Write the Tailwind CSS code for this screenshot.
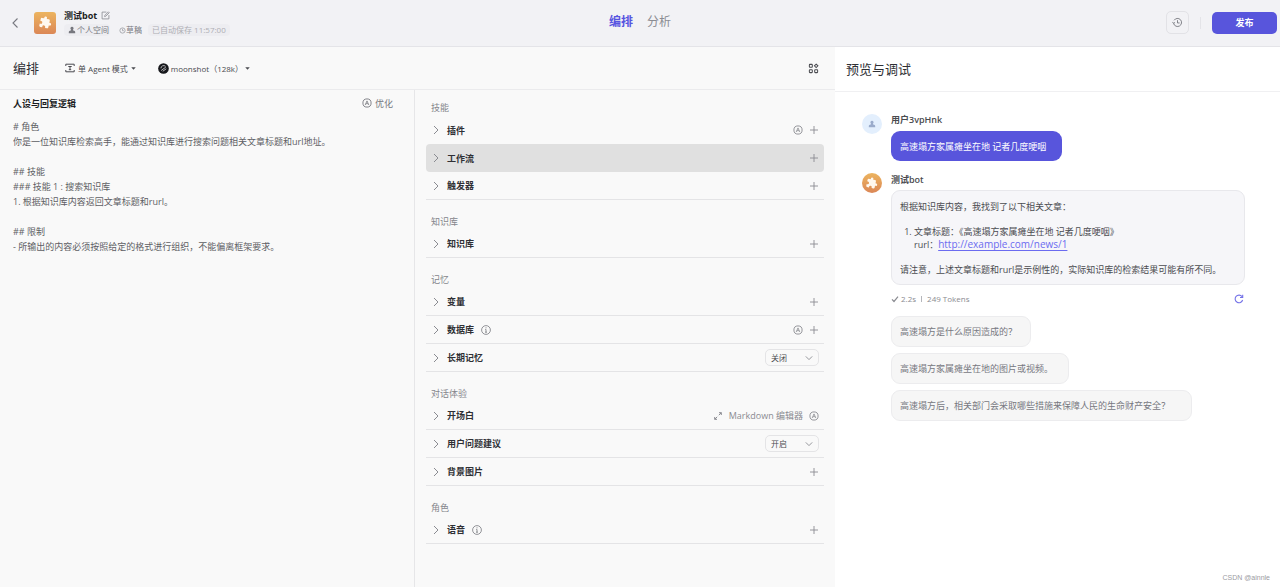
<!DOCTYPE html>
<html lang="zh-CN">
<head>
<meta charset="utf-8">
<meta name="viewport" content="width=device-width, initial-scale=1">
<title>测试bot - 编排</title>
<script src="https://cdn.jsdelivr.net/npm/@tailwindcss/browser@4"></script>
</head>
<body class="relative flex min-h-screen flex-col bg-white font-['Open_Sans','Noto_Sans_CJK_SC',sans-serif] text-[9px] leading-[15px] text-[#4a4b50]">
<svg class="hidden" aria-hidden="true">
  <symbol id="chev" viewBox="0 0 8 10"><path d="M2 1l4 4-4 4" fill="none" stroke="currentColor" stroke-width="1"/></symbol>
  <symbol id="down" viewBox="0 0 8 8"><path d="M.8 2.4L4 5.6l3.2-3.2" fill="none" stroke="currentColor" stroke-width=".9"/></symbol>
  <symbol id="plus" viewBox="0 0 10 10"><path d="M5 1v8M1 5h8" fill="none" stroke="currentColor" stroke-width=".9"/></symbol>
  <symbol id="auto" viewBox="0 0 10 10"><circle cx="5" cy="5" r="4.1" fill="none" stroke="currentColor" stroke-width=".9"/><path d="M3.2 7L5 2.9 6.8 7M3.9 5.7h2.2" fill="none" stroke="currentColor" stroke-width=".8"/></symbol>
  <symbol id="info" viewBox="0 0 10 10"><circle cx="5" cy="5" r="4.4" fill="none" stroke="currentColor" stroke-width=".8"/><path d="M5 2.3v1M4.2 4.4H5v2.8M4 7.2h2" fill="none" stroke="currentColor" stroke-width=".8"/></symbol>
  <symbol id="caret" viewBox="0 0 6 4"><path d="M0 .3h6L3 3.700z" fill="currentColor"/></symbol>
  <symbol id="puzzle" viewBox="0 0 24 24"><path fill="currentColor" d="M20.5 11H19V7c0-1.100-.9-2-2-2h-4V3.500a2.500 2.500 0 0 0-5 0V5H4c-1.100 0-2 .9-2 2v3.800h1.500a2.700 2.700 0 0 1 0 5.400H2V20c0 1.100.9 2 2 2h3.800v-1.500a2.700 2.700 0 0 1 5.400 0V22H17c1.100 0 2-.9 2-2v-4h1.500a2.500 2.500 0 0 0 0-5z"/></symbol>
  <symbol id="person" viewBox="0 0 10 10"><path fill="currentColor" d="M5 1a2 2 0 0 1 1.300 3.500L6.500 5.500c1.600.2 2.500.9 2.500 2.300V9H1V7.800C1 6.400 1.900 5.700 3.500 5.500l.2-1A2 2 0 0 1 5 1z"/></symbol>
</svg>

<header class="grid h-[47px] shrink-0 grid-cols-[1fr_auto_1fr] items-center border-b border-[#e4e4e8] bg-[#f2f2f5] px-[3px] pb-px">
  <div class="flex items-center pl-2">
    <button type="button" aria-label="返回" class="text-[#77787f]"><svg class="h-3 w-2" viewBox="0 0 8 12"><path d="M6.500 1.500L2 6l4.500 4.500" fill="none" stroke="currentColor" stroke-width="1.100"/></svg></button>
    <span class="ml-[15px] flex size-[22px] items-center justify-center rounded-[3px] bg-linear-to-b from-[#ecb45f] to-[#db8756] text-[#fff8ef]"><svg class="size-[13px] rotate-12"><use href="#puzzle"/></svg></span>
    <div class="ml-2 flex flex-col">
      <div class="flex h-[14px] items-center gap-1 text-[#1c1d23]">
        <h1 class="font-bold">测试bot</h1>
        <button type="button" aria-label="编辑名称" class="text-[#8a8b91]"><svg class="size-[9px]" viewBox="0 0 10 10" fill="none" stroke="currentColor" stroke-width=".9"><path d="M6 1.200H1.200v7.600h7.600V4.500M4 6.200l.3-1.400L8.200.9l1 1-3.900 3.900z"/></svg></button>
      </div>
      <div class="mt-px flex h-[14px] items-center text-[8px] leading-3 text-[#77787f]">
        <span class="flex items-center gap-px rounded-sm bg-[#ededf1] pr-px pl-1"><svg class="size-2"><use href="#person"/></svg>个人空间</span>
        <span class="ml-[9px] flex items-center"><svg class="size-[7px] text-[#a4a5ab]" viewBox="0 0 8 8" fill="none" stroke="currentColor"><circle cx="4" cy="4" r="3"/><path d="M4 2v2.200h1.500"/></svg>草稿</span>
        <span class="ml-[6px] rounded-sm bg-[#ededf1] px-1 text-[#adaeb4]">已自动保存 11:57:00</span>
      </div>
    </div>
  </div>
  <nav class="flex items-center gap-[14px] pb-[2px] text-xs leading-5">
    <a href="#build" class="font-bold text-[#5754e0]">编排</a>
    <a href="#analysis" class="text-[#8b8c92]">分析</a>
  </nav>
  <div class="flex items-center justify-end">
    <button type="button" aria-label="历史版本" class="flex size-[23px] items-center justify-center rounded-[5px] border border-[#e2e2e6] text-[#77787f]"><svg class="size-[11px]" viewBox="0 0 12 12" fill="none" stroke="currentColor" stroke-width="1"><path d="M1.800 7.200A4.400 4.400 0 1 0 2.300 3.600M.6 5.400l1.100 1.700 1.600-1.200M6 3.500v3h2.300"/></svg></button>
    <span class="mx-[11px] h-3 w-px bg-[#e4e4e8]"></span>
    <button type="button" class="h-[22px] w-[65px] rounded-[5px] bg-[#5855dc] font-bold text-white">发布</button>
  </div>
</header>

<div class="grid grow grid-cols-[835fr_445fr]">
  <main id="build" class="flex min-w-0 flex-col bg-[#f9f9f9]">
    <div class="flex h-[43px] shrink-0 items-center border-b border-[#ebebed] pr-4 pl-[13px]">
      <h2 class="text-[13px] leading-5 text-[#2f3035]">编排</h2>
      <button type="button" class="ml-[26px] flex items-center gap-[3px] text-[8px]"><svg class="size-[10px]" viewBox="0 0 10 10" fill="none" stroke="currentColor" stroke-width="1"><path d="M.8 3V1.200h8.400V3M.8 7v1.800h8.400V7M3.300 3.500h3.400M5 3.500v3.200M3.800 6.700h2.400"/></svg>单 Agent 模式<svg class="h-[3px] w-[5px]"><use href="#caret"/></svg></button>
      <button type="button" class="ml-[22px] flex items-center gap-[2px] text-[8px]"><svg class="size-[11px]" viewBox="0 0 12 12"><circle cx="6" cy="6" r="5.800" fill="#17181c"/><path d="M3.200 5.800a3 3 0 0 1 5-2.200M3.500 8.200l5-3.700M5.200 9l3.800-2.700" fill="none" stroke="#d9d9dc" stroke-width=".9"/></svg><span>moonshot（128k）</span><svg class="h-[3px] w-[5px]"><use href="#caret"/></svg></button>
      <button type="button" aria-label="布局" class="ml-auto text-[#4a4b50]"><svg class="size-[11px]" viewBox="0 0 12 12" fill="none" stroke="currentColor" stroke-width="1.100"><rect x="1.500" y="1.500" width="3.200" height="3.200" rx=".6"/><path d="M8.900 1.200l1.900 1.900L8.900 5 7 3.100z"/><rect x="1.500" y="7.300" width="3.200" height="3.200" rx=".6"/><rect x="7.300" y="7.300" width="3.200" height="3.200" rx=".6"/></svg></button>
    </div>
    <div class="grid grow grid-cols-[415fr_420fr]">
      <section class="flex flex-col border-r border-[#e6e6e8] pl-[13px]">
        <div class="flex h-[26px] items-center justify-between pr-[21px]">
          <label for="prompt" class="font-bold text-[#1c1d23]">人设与回复逻辑</label>
          <button type="button" class="flex items-center gap-[3px] text-[#77787f]"><svg class="size-[10px]"><use href="#auto"/></svg>优化</button>
        </div>
        <textarea id="prompt" class="mt-[3px] w-full grow resize-none bg-transparent text-[#5d5e64] outline-none">
# 角色
你是一位知识库检索高手，能通过知识库进行搜索问题相关文章标题和url地址。

## 技能
### 技能 1 : 搜索知识库
1. 根据知识库内容返回文章标题和rurl。

## 限制
- 所输出的内容必须按照给定的格式进行组织，不能偏离框架要求。</textarea>
      </section>

      <div class="flex flex-col px-[11px] text-[#8a8b91]">
        <section class="pt-[10px]">
          <h3 class="h-4 pl-[5px] leading-4 text-[#85868c]">技能</h3>
          <div class="flex h-7 items-center px-[5px]">
            <button type="button" class="flex items-center gap-[7px] font-bold text-[#2f3035]"><svg class="ml-px h-[10px] w-2 text-[#8a8b91]"><use href="#chev"/></svg>插件</button>
            <button type="button" aria-label="自动添加插件" class="ml-auto"><svg class="size-[10px]"><use href="#auto"/></svg></button>
            <button type="button" aria-label="添加插件" class="ml-[6px]"><svg class="size-[10px]"><use href="#plus"/></svg></button>
          </div>
          <div class="flex h-7 items-center rounded-sm bg-[#e0e0e0] px-[5px]">
            <button type="button" class="flex items-center gap-[7px] font-bold text-[#2f3035]"><svg class="ml-px h-[10px] w-2 text-[#8a8b91]"><use href="#chev"/></svg>工作流</button>
            <button type="button" aria-label="添加工作流" class="ml-auto"><svg class="size-[10px]"><use href="#plus"/></svg></button>
          </div>
          <div class="flex h-7 items-center border-b border-[#e4e4e6] px-[5px]">
            <button type="button" class="flex items-center gap-[7px] font-bold text-[#2f3035]"><svg class="ml-px h-[10px] w-2 text-[#8a8b91]"><use href="#chev"/></svg>触发器</button>
            <button type="button" aria-label="添加触发器" class="ml-auto"><svg class="size-[10px]"><use href="#plus"/></svg></button>
          </div>
        </section>
        <section class="pt-[14px]">
          <h3 class="h-4 pl-[5px] leading-4 text-[#85868c]">知识库</h3>
          <div class="flex h-7 items-center border-b border-[#e4e4e6] px-[5px]">
            <button type="button" class="flex items-center gap-[7px] font-bold text-[#2f3035]"><svg class="ml-px h-[10px] w-2 text-[#8a8b91]"><use href="#chev"/></svg>知识库</button>
            <button type="button" aria-label="添加知识库" class="ml-auto"><svg class="size-[10px]"><use href="#plus"/></svg></button>
          </div>
        </section>
        <section class="pt-[14px]">
          <h3 class="h-4 pl-[5px] leading-4 text-[#85868c]">记忆</h3>
          <div class="flex h-7 items-center border-b border-[#e4e4e6] px-[5px]">
            <button type="button" class="flex items-center gap-[7px] font-bold text-[#2f3035]"><svg class="ml-px h-[10px] w-2 text-[#8a8b91]"><use href="#chev"/></svg>变量</button>
            <button type="button" aria-label="添加变量" class="ml-auto"><svg class="size-[10px]"><use href="#plus"/></svg></button>
          </div>
          <div class="flex h-7 items-center border-b border-[#e4e4e6] px-[5px]">
            <button type="button" class="flex items-center gap-[7px] font-bold text-[#2f3035]"><svg class="ml-px h-[10px] w-2 text-[#8a8b91]"><use href="#chev"/></svg>数据库<svg class="size-[10px] text-[#77787f]"><use href="#info"/></svg></button>
            <button type="button" aria-label="自动添加数据库" class="ml-auto"><svg class="size-[10px]"><use href="#auto"/></svg></button>
            <button type="button" aria-label="添加数据库" class="ml-[6px]"><svg class="size-[10px]"><use href="#plus"/></svg></button>
          </div>
          <div class="flex h-7 items-center border-b border-[#e4e4e6] px-[5px]">
            <button type="button" class="flex items-center gap-[7px] font-bold text-[#2f3035]"><svg class="ml-px h-[10px] w-2 text-[#8a8b91]"><use href="#chev"/></svg>长期记忆</button>
            <span class="relative ml-auto flex items-center">
              <select aria-label="长期记忆" class="h-[17px] w-[54px] appearance-none rounded-[5px] border border-[#e4e4e6] pl-[5px] text-[8px] text-[#4a4b50]"><option>关闭</option><option>开启</option></select>
              <svg class="pointer-events-none absolute right-[6px] size-2"><use href="#down"/></svg>
            </span>
          </div>
        </section>
        <section class="pt-[14px]">
          <h3 class="h-4 pl-[5px] leading-4 text-[#85868c]">对话体验</h3>
          <div class="flex h-7 items-center border-b border-[#e4e4e6] px-[5px]">
            <button type="button" class="flex items-center gap-[7px] font-bold text-[#2f3035]"><svg class="ml-px h-[10px] w-2 text-[#8a8b91]"><use href="#chev"/></svg>开场白</button>
            <button type="button" class="ml-auto flex items-center gap-[7px]"><svg class="size-2" viewBox="0 0 8 8" fill="none" stroke="currentColor" stroke-width="1"><path d="M5 .7h2.300V3M7.300.7L4.800 3.200M.7 5v2.300H3M.7 7.300l2.500-2.500"/></svg>Markdown 编辑器</button>
            <button type="button" aria-label="自动生成开场白" class="ml-[6px]"><svg class="size-[10px]"><use href="#auto"/></svg></button>
          </div>
          <div class="flex h-7 items-center border-b border-[#e4e4e6] px-[5px]">
            <button type="button" class="flex items-center gap-[7px] font-bold text-[#2f3035]"><svg class="ml-px h-[10px] w-2 text-[#8a8b91]"><use href="#chev"/></svg>用户问题建议</button>
            <span class="relative ml-auto flex items-center">
              <select aria-label="用户问题建议" class="h-[17px] w-[54px] appearance-none rounded-[5px] border border-[#e4e4e6] pl-[5px] text-[8px] text-[#4a4b50]"><option>开启</option><option>关闭</option></select>
              <svg class="pointer-events-none absolute right-[6px] size-2"><use href="#down"/></svg>
            </span>
          </div>
          <div class="flex h-7 items-center border-b border-[#e4e4e6] px-[5px]">
            <button type="button" class="flex items-center gap-[7px] font-bold text-[#2f3035]"><svg class="ml-px h-[10px] w-2 text-[#8a8b91]"><use href="#chev"/></svg>背景图片</button>
            <button type="button" aria-label="添加背景图片" class="ml-auto"><svg class="size-[10px]"><use href="#plus"/></svg></button>
          </div>
        </section>
        <section class="pt-[14px]">
          <h3 class="h-4 pl-[5px] leading-4 text-[#85868c]">角色</h3>
          <div class="flex h-7 items-center border-b border-[#e4e4e6] px-[5px]">
            <button type="button" class="flex items-center gap-[7px] font-bold text-[#2f3035]"><svg class="ml-px h-[10px] w-2 text-[#8a8b91]"><use href="#chev"/></svg>语音<svg class="size-[10px] text-[#77787f]"><use href="#info"/></svg></button>
            <button type="button" aria-label="添加语音" class="ml-auto"><svg class="size-[10px]"><use href="#plus"/></svg></button>
          </div>
        </section>
      </div>
    </div>
  </main>

  <aside class="flex min-w-0 flex-col bg-white">
    <h2 class="h-[45px] border-b border-[#f0f0f2] pl-[11px] text-[13px] leading-[44px] text-[#2f3035]">预览与调试</h2>
    <div class="flex flex-col pt-5 pr-[35px] pl-[27px]">
      <article class="flex gap-[9px]">
        <span class="mt-[2px] flex size-5 shrink-0 items-center justify-center rounded-full bg-[#e3effd] text-[#9aabcb]"><svg class="size-2"><use href="#person"/></svg></span>
        <div>
          <h4 class="font-semibold">用户3vpHnk</h4>
          <p class="mt-1 flex h-[30px] w-[171px] items-center rounded-[9px] bg-[#5855dc] pl-[9px] text-white">高速塌方家属瘫坐在地 记者几度哽咽</p>
        </div>
      </article>
      <article class="mt-[11px] flex gap-[9px]">
        <span class="mt-px flex size-5 shrink-0 items-center justify-center rounded-full bg-linear-to-b from-[#ecb45f] to-[#db8756] text-[#fff8ef]"><svg class="size-3 rotate-12"><use href="#puzzle"/></svg></span>
        <div class="grow">
          <h4 class="font-semibold">测试bot</h4>
          <div class="mt-[3px] rounded-[9px] border border-[#e8e8ec] bg-[#f6f6f9] px-2 pt-[9px] pb-2 leading-[13px]">
            <p>根据知识库内容，我找到了以下相关文章：</p>
            <ol class="my-3 list-decimal pl-[14px]">
              <li>文章标题：《高速塌方家属瘫坐在地 记者几度哽咽》<br>rurl：<a href="http://example.com/news/1" class="text-[10px] text-[#6b6bf0] underline underline-offset-2">http://example.com/news/1</a></li>
            </ol>
            <p>请注意，上述文章标题和rurl是示例性的，实际知识库的检索结果可能有所不同。</p>
          </div>
          <div class="mt-[6px] flex items-center text-[8px] text-[#8a8b91]">
            <svg class="size-2" viewBox="0 0 8 8"><path d="M1 4.300L3 6.500 7 1.700" fill="none" stroke="currentColor" stroke-width="1.200"/></svg>
            <span class="ml-[2px]">2.2s</span>
            <span class="mx-[5px] h-[6px] w-px bg-[#b5b6bb]"></span>
            <span>249 Tokens</span>
            <button type="button" aria-label="重新生成" class="mr-px ml-auto text-[#7472e8]"><svg class="size-[10px]" viewBox="0 0 10 10" fill="none" stroke="currentColor" stroke-width="1.100"><path d="M8.600 6A3.800 3.800 0 1 1 8 2.700M8.700.8v2.700H6"/></svg></button>
          </div>
          <div class="mt-[10px] flex flex-col items-start gap-[6px] text-[#77787f]">
            <button type="button" class="h-[31px] w-[140px] rounded-[9px] border border-[#ececee] bg-[#f6f6f6] pl-2 text-left">高速塌方是什么原因造成的？</button>
            <button type="button" class="h-[31px] w-[178px] rounded-[9px] border border-[#ececee] bg-[#f6f6f6] pl-2 text-left">高速塌方家属瘫坐在地的图片或视频。</button>
            <button type="button" class="h-[31px] w-[301px] rounded-[9px] border border-[#ececee] bg-[#f6f6f6] pl-2 text-left">高速塌方后，相关部门会采取哪些措施来保障人民的生命财产安全？</button>
          </div>
        </div>
      </article>
    </div>
  </aside>
</div>
<span class="absolute right-[10px] bottom-[3px] font-['Liberation_Sans',sans-serif] text-[7px] leading-3 text-[#9b9b9f]">CSDN @ainnle</span>
</body>
</html>
